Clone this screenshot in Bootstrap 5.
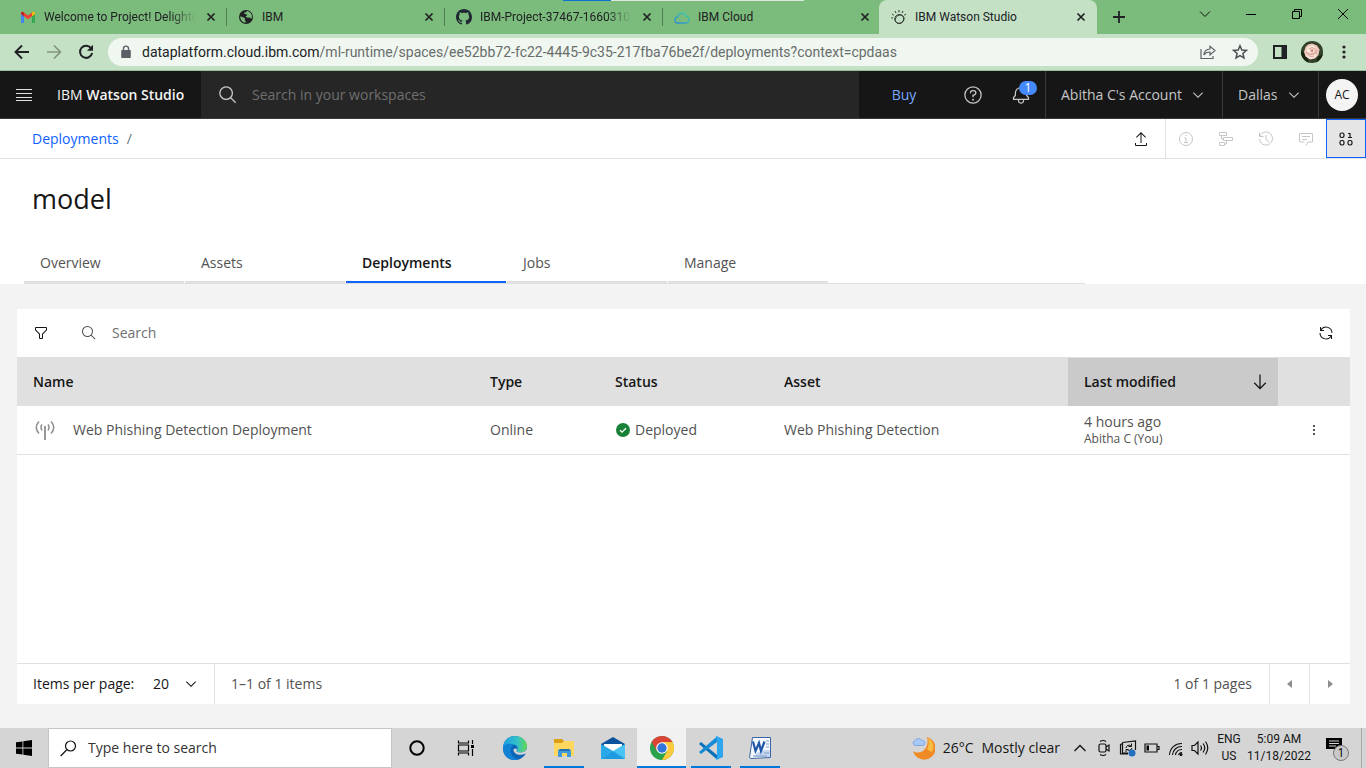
<!DOCTYPE html>
<html lang="en">
<head>
<meta charset="utf-8">
<meta name="viewport" content="width=device-width, initial-scale=1">
<title>IBM Watson Studio</title>
<link rel="stylesheet" href="https://cdn.jsdelivr.net/npm/bootstrap@5.3.0/dist/css/bootstrap.min.css">
<style>
  :root { --ui: "Open Sans", "Noto Sans", sans-serif; --chrome: Roboto, "Open Sans", sans-serif; --app: "Open Sans", "Noto Sans", sans-serif; }
  body { font-family: var(--app); font-size: 14px; line-height: 18px; color: #161616; background: #f3f3f3; }
  svg { display: block; flex: none; }
  button, .plain-input, .page-select { background: none; border: 0; padding: 0; font: inherit; color: inherit; outline: 0; border-radius: 0; }
  a { text-decoration: none; }
  .center { display: flex; align-items: center; justify-content: center; flex: none; }

  /* browser chrome */
  .tab-strip { height: 34px; background: #7bbb7b; padding-left: 9px; font: 12px/16px var(--chrome); color: #202124; }
  .browser-tab { flex: 0 1 218px; min-width: 0; padding: 0 7px 0 11px; border-right: 1px solid #527f52; height: 18px; }
  .browser-tab.no-line { border-right-color: transparent; }
  .browser-tab.current { height: 34px; border: 0; border-radius: 8px 8px 0 0; background: #c5e1c5; padding: 0 8px 0 12px; margin-left: -2px; }
  .tab-label { flex: 1 1 0; min-width: 0; white-space: nowrap; overflow: hidden; }
  .tab-label.fade-end { -webkit-mask-image: linear-gradient(90deg, #000 84%, transparent); mask-image: linear-gradient(90deg, #000 84%, transparent); }
  .tab-close { width: 16px; height: 16px; }
  .new-tab { width: 44px; height: 34px; }
  .win-btn { width: 46px; height: 28px; }
  .load-bar { position: absolute; top: 0; left: 563px; width: 241px; height: 1px; background: linear-gradient(90deg, #0b73d4 48px, #dce8dc 48px); }
  .nav-bar { height: 37px; background: #c5e1c5; border-bottom: 1px solid #9bbb9c; padding-left: 6px; padding-right: 6px; }
  .nav-btn { width: 32px; height: 32px; }
  .omnibox { height: 28px; border-radius: 14px; background: #f0f7f0; margin-left: 6px; margin-right: 6px; padding-left: 10px; padding-right: 2px; font: 14px/20px var(--chrome); }
  .plain-input { min-width: 0; flex: 1 1 0; }
  .url-text { white-space: nowrap; overflow: hidden; color: #696d6c; }
  .url-text b { font-weight: 400; color: #202124; }
  .user-photo { width: 22px; height: 22px; border-radius: 50%; overflow: hidden; }

  /* application header */
  .app-header { height: 48px; background: #161616; border-bottom: 1px solid #393939; color: #c6c6c6; }
  .menu-btn { width: 48px; }
  .brand-name { width: 153px; padding-left: 9px; color: #f4f4f4; white-space: nowrap; }
  .brand-name b { font-weight: 600; }
  .app-search { background: #262626; padding-left: 17px; gap: 14px; }
  .app-search input::placeholder { color: #6f6f6f; opacity: 1; }
  .buy-link { width: 90px; color: #78a9ff; }
  .header-icon { width: 48px; position: relative; }
  .count-badge { position: absolute; top: 10px; left: 22px; width: 18px; height: 14px; border-radius: 7px; background: #4589ff; color: #fff; font-size: 12px; line-height: 14px; }
  .header-menu { border-left: 1px solid #393939; padding: 0 16px 0 15px; gap: 8px; white-space: nowrap; }
  .account-menu { width: 177px; }
  .region-menu { width: 96px; }
  .avatar-cell { width: 48px; border-left: 1px solid #393939; padding-right: 1px; }
  .avatar-chip { width: 32px; height: 32px; border-radius: 50%; background: #f4f4f4; color: #161616; font-size: 12px; }

  /* title area */
  .crumb-bar { height: 40px; background: #fff; border-bottom: 1px solid #e0e0e0; padding-left: 32px; }
  .crumb-bar a { color: #0f62fe; }
  .tool-btn { width: 40px; height: 39px; }
  .tool-group { border-left: 1px solid #e0e0e0; }
  .tool-btn.pressed { background: #e5e5e5; border: 1px solid #0f62fe; color: #161616; }
  .title-area { background: #fff; padding: 22px 0 0 24px; }
  .page-title { font-size: 27px; line-height: 36px; font-weight: 400; margin: 0; padding-left: 8px; }
  .section-tabs { margin-top: 27px; max-width: 1061px; height: 40px; gap: 1px; box-shadow: inset 0 -1px #e0e0e0; }
  .section-tabs a { flex: 0 1 160px; color: #525252; padding: 10px 16px 9px; border-bottom: 3px solid #e0e0e0; }
  .section-tabs a.chosen { color: #161616; font-weight: 600; border-bottom: 2px solid #0f62fe; margin-bottom: 1px; }

  /* deployments table */
  .page-body { padding: 25px 16px 24px 17px; }
  .list-tools { height: 48px; }
  .filter-btn { width: 48px; height: 48px; }
  .list-search { padding-left: 16px; gap: 15px; }
  .list-search svg { color: #525252; }
  .list-search input::placeholder { color: #6f6f6f; opacity: 1; }
  .deploy-table { table-layout: fixed; width: 100%; border-collapse: separate; border-spacing: 0; color: #525252; }
  .deploy-table th { height: 49px; background: #e0e0e0; color: #161616; font-weight: 600; padding: 0 16px; }
  .deploy-table th.sorted { background: #cacaca; box-shadow: inset 0 1px #e0e0e0; padding-right: 10px; }
  .deploy-table td { height: 49px; padding: 0 16px; border-bottom: 1px solid #e0e0e0; white-space: nowrap; }
  .deploy-table .by-line { font-size: 12px; line-height: 16px; }
  .c-type { width: 125px; } .c-status { width: 169px; } .c-asset { width: 300px; } .c-date { width: 210px; } .c-menu { width: 72px; }
  .pager { height: 41px; border-top: 1px solid #e0e0e0; color: #525252; }
  .per-page { width: 198px; padding-left: 16px; padding-right: 15px; border-right: 1px solid #e0e0e0; color: #161616; white-space: nowrap; }
  .page-select { appearance: none; -webkit-appearance: none; width: 46px; background: url("data:image/svg+xml,%3Csvg xmlns='http://www.w3.org/2000/svg' viewBox='0 0 32 32'%3E%3Cpath fill='%23161616' d='M16 22 6 12 7.4 10.6 16 19.2 24.6 10.6 26 12z'/%3E%3C/svg%3E") right center / 16px no-repeat; }
  .page-btn { width: 40px; border-left: 1px solid #e0e0e0; color: #8d8d8d; }
  .page-btn:last-child { width: 41px; }
  .page-count { padding-right: 17px; }

  /* desktop taskbar */
  .task-bar { height: 40px; background: #d5d5d5; font: 14px/18px var(--ui); color: #161616; }
  .start-btn { width: 48px; }
  .task-search { flex: 0 1 344px; background: #fff; border: 1px solid #c5c5c5; padding-left: 11px; gap: 11px; }
  .task-search input::placeholder { color: #333; opacity: 1; }
  .task-item { width: 49px; position: relative; }
  .task-item.open::after { content: ""; position: absolute; left: 5px; right: 4px; bottom: 0; height: 2px; background: #0078d7; }
  .task-item.front { background: #f1f1f1; }
  .task-item.front::after { left: 0; right: 0; }
  .tray-icon { width: 24px; }
  .small-lines { font: 12px/17px var(--chrome); text-align: center; }
  .lang-cell { width: 34px; }
  .clock-cell { width: 66px; }
  .notice-btn { width: 50px; border-right: 1px solid #a9a9a9; margin-right: 4px; }
</style>
</head>
<body class="d-flex flex-column min-vh-100">

<svg width="0" height="0" class="position-absolute" aria-hidden="true">
  <symbol id="x" viewBox="0 0 16 16"><path d="M4.500 4.500l7 7m0-7l-7 7" stroke="#202124" stroke-width="1.700" fill="none"/></symbol>
  <symbol id="chev" viewBox="0 0 32 32"><path fill="currentColor" d="M16 22 6 12 7.400 10.600 16 19.200 24.600 10.600 26 12z"/></symbol>
  <symbol id="search" viewBox="0 0 32 32"><path fill="currentColor" d="M29 27.586l-7.552-7.552a11.018 11.018 0 1 0-1.414 1.414L27.586 29ZM4 13a9 9 0 1 1 9 9A9.010 9.010 0 0 1 4 13Z"/></symbol>
  <symbol id="dots" viewBox="0 0 16 16"><path fill="currentColor" d="M7 3h2v2H7zM7 7h2v2H7zM7 11h2v2H7z"/></symbol>
</svg>

<header class="tab-strip d-flex align-items-center position-relative">
  <div class="load-bar"></div>
  <div class="browser-tab d-flex align-items-center gap-2">
    <svg width="16" height="16" viewBox="0 0 16 16"><path fill="#4285f4" d="M1 4.500l3 2.200V14H2a1 1 0 0 1-1-1z"/><path fill="#34a853" d="M12 6.700l3-2.200V13a1 1 0 0 1-1 1h-2z"/><path fill="#ea4335" d="M4 3.600l4 3 4-3v3.700l-4 3-4-3z"/><path fill="#c5221f" d="M1 4.700C1 2.500 2.800 2.300 4 3.400v3.900L1 5.200z"/><path fill="#fbbc04" d="M15 4.700c0-2.200-1.800-2.400-3-1.300v3.900l3-2.100z"/></svg>
    <span class="tab-label fade-end">Welcome to Project! Delighte</span>
    <button class="tab-close" aria-label="Close tab"><svg width="16" height="16"><use href="#x"/></svg></button>
  </div>
  <div class="browser-tab d-flex align-items-center gap-2">
    <svg width="16" height="16" viewBox="0 0 16 16"><circle cx="8" cy="8" r="7" fill="#202124"/><path fill="#7bbb7b" d="M2.300 7.200l3.300 1.300 1.600 1.100-.6 1.600 1 .6v2C4.600 13.500 2 10.700 2.300 7.200zM9 2.100L7.600 3.500 6 3.600l.8 1.600 1.600-.2.800 1.300-1.800 1.200 2.200 1.300 2.200-.4 1.500 1.700c1.600-3.200.2-7-4.300-8z"/></svg>
    <span class="tab-label">IBM</span>
    <button class="tab-close" aria-label="Close tab"><svg width="16" height="16"><use href="#x"/></svg></button>
  </div>
  <div class="browser-tab d-flex align-items-center gap-2">
    <svg width="16" height="16" viewBox="0 0 16 16"><path fill="#202833" d="M8 0C3.580 0 0 3.580 0 8c0 3.540 2.290 6.530 5.470 7.590.4.070.55-.17.55-.38 0-.19-.01-.82-.01-1.490-2.010.37-2.530-.49-2.690-.94-.09-.23-.48-.94-.82-1.130-.28-.15-.68-.52-.01-.53.63-.01 1.080.58 1.230.82.72 1.210 1.870.87 2.330.66.070-.52.28-.87.51-1.070-1.780-.2-3.640-.89-3.640-3.950 0-.87.31-1.590.82-2.150-.08-.2-.36-1.020.08-2.120 0 0 .67-.21 2.200.82.64-.18 1.320-.27 2-.27s1.360.09 2 .27c1.530-1.040 2.200-.82 2.200-.82.44 1.100.16 1.920.08 2.120.51.56.82 1.270.82 2.150 0 3.070-1.870 3.750-3.650 3.950.29.25.54.73.54 1.480 0 1.070-.01 1.930-.01 2.200 0 .21.15.46.55.38A8.010 8.010 0 0 0 16 8c0-4.420-3.580-8-8-8z"/></svg>
    <span class="tab-label fade-end">IBM-Project-37467-16603102</span>
    <button class="tab-close" aria-label="Close tab"><svg width="16" height="16"><use href="#x"/></svg></button>
  </div>
  <div class="browser-tab no-line d-flex align-items-center gap-2">
    <svg width="16" height="16" viewBox="0 0 16 16" fill="none"><defs><linearGradient id="cg" x1="0" y1="1" x2="1" y2="0"><stop stop-color="#2f86d8"/><stop offset="1" stop-color="#3fd0a0"/></linearGradient></defs><path stroke="url(#cg)" stroke-width="1.300" d="M4 14a3 3 0 0 1-.3-6 4.600 4.600 0 0 1 8.700-.7A3.400 3.400 0 0 1 12 14z"/><path stroke="#55cfae" d="M2 5L.8 4.300M4.500 3.600L3.800 2.400M8 3V1.500M11.500 3.600l.7-1.200"/></svg>
    <span class="tab-label">IBM Cloud</span>
    <button class="tab-close" aria-label="Close tab"><svg width="16" height="16"><use href="#x"/></svg></button>
  </div>
  <div class="browser-tab current d-flex align-items-center gap-2">
    <svg width="16" height="16" viewBox="0 0 16 16" fill="none" stroke="#2c352c"><circle cx="8.300" cy="10" r="4.500"/><ellipse cx="8.500" cy="10.200" rx="4.700" ry="3.800" transform="rotate(-35 8.500 10)" stroke-width=".8"/><path d="M5 4L4 2M8 3.300V1M11 4l1-2M2.700 6.200L1 5M13.300 6.200L15 5M2 9H.3"/></svg>
    <span class="tab-label">IBM Watson Studio</span>
    <button class="tab-close" aria-label="Close tab"><svg width="16" height="16"><use href="#x"/></svg></button>
  </div>
  <button class="new-tab center" aria-label="New tab"><svg width="14" height="14" viewBox="0 0 14 14"><path d="M7 1v12M1 7h12" stroke="#202124" stroke-width="1.800"/></svg></button>
  <div class="ms-auto d-flex align-self-start">
    <button class="win-btn center" aria-label="Search tabs"><svg width="12" height="12" viewBox="0 0 12 12"><path d="M1 3.500l5 5 5-5" stroke="#111" fill="none"/></svg></button>
    <button class="win-btn center" aria-label="Minimize"><svg width="12" height="12" viewBox="0 0 12 12"><path d="M1 6.500h10" stroke="#000"/></svg></button>
    <button class="win-btn center" aria-label="Restore"><svg width="12" height="12" viewBox="0 0 12 12"><path d="M1.500 3.500h7v7h-7zM3.500 3.500v-2h7v7h-2" stroke="#000" fill="none"/></svg></button>
    <button class="win-btn center" aria-label="Close"><svg width="12" height="12" viewBox="0 0 12 12"><path d="M1 1l10 10M11 1L1 11" stroke="#000"/></svg></button>
  </div>
</header>

<div class="nav-bar d-flex align-items-center">
  <button class="nav-btn center" aria-label="Back"><svg width="16" height="16" viewBox="0 0 16 16"><path d="M15 8H2M8 1.500L1.500 8 8 14.500" stroke="#202124" stroke-width="1.900" fill="none"/></svg></button>
  <button class="nav-btn center" aria-label="Forward"><svg width="16" height="16" viewBox="0 0 16 16"><path d="M1 8h13M8 1.500L14.500 8 8 14.500" stroke="#83937f" stroke-width="1.700" fill="none"/></svg></button>
  <button class="nav-btn center" aria-label="Reload"><svg width="16" height="16" viewBox="0 0 16 16"><path d="M13.300 4.500A6.100 6.100 0 1 0 14.100 9" stroke="#202124" stroke-width="2" fill="none"/><path d="M15 .8v6H9z" fill="#202124"/></svg></button>
  <div class="omnibox d-flex align-items-center flex-grow-1">
    <svg width="16" height="16" viewBox="0 0 16 16"><path fill="#5a5f66" d="M4 6h8a.8.8 0 0 1 .8.800v6.400a.8.8 0 0 1-.8.800H4a.8.8 0 0 1-.8-.8V6.800A.8.8 0 0 1 4 6z"/><path d="M5.500 6.500V4.600a2.500 2.500 0 0 1 5 0v1.900" stroke="#5a5f66" stroke-width="1.400" fill="none"/></svg>
    <div class="url-text flex-grow-1 ps-2"><b>dataplatform.cloud.ibm.com</b>/ml-runtime/spaces/ee52bb72-fc22-4445-9c35-217fba76be2f/deployments?context=cpdaas</div>
    <button class="nav-btn center" aria-label="Share"><svg width="16" height="16" viewBox="0 0 16 16" fill="none" stroke="#5f6368" stroke-width="1.200"><path d="M1 5v9.500h12V12"/><path d="M3.800 11c.4-4 2.700-5.800 6.200-6V2.200L15 6.500 10 11V8c-3-.1-4.700.8-6.200 3z"/></svg></button>
    <button class="nav-btn center" aria-label="Bookmark"><svg width="16" height="16" viewBox="0 0 16 16"><path fill="none" stroke="#4b5055" stroke-width="1.500" d="M8 1.700l1.800 4.300 4.600.4-3.500 3 1.100 4.500L8 11.500l-4 2.400 1.100-4.500-3.500-3 4.600-.4z"/></svg></button>
  </div>
  <button class="nav-btn center" aria-label="Side panel"><svg width="16" height="16" viewBox="0 0 16 16"><path fill="#202124" d="M1 1h14v14H1zM3 3v10h6.500V3z" fill-rule="evenodd"/></svg></button>
  <button class="nav-btn center" aria-label="Profile"><span class="user-photo"><svg width="22" height="22" viewBox="0 0 22 22"><path fill="#33402b" d="M0 0h22v22H0z"/><path fill="#17230f" d="M0 10l5 3 3 9H0zM16 0l6 8V0zM17 16l5-3v9h-7z"/><path fill="#efc6b8" d="M7 3.500l4-1 5 2 2.500 4-1 5.500-3.500 3.500-5 1-4.500-3L3 11l1.500-5z"/><path fill="#fae7dc" d="M7 6l5-2 3 3-2 4-5 1-3-2zM4 12l5 2 5-1 2 2-5 3-4-1z"/><path fill="none" stroke="#d39a8e" d="M8 8q3-3 6 0t-1 5q-4 2-6-1M5 11q3 6 8 4"/><circle cx="11" cy="9.500" r="1.500" fill="#d98e82"/></svg></span></button>
  <button class="nav-btn center" aria-label="Browser menu"><svg width="16" height="16" viewBox="0 0 16 16" fill="#202124"><circle cx="8" cy="3" r="1.600"/><circle cx="8" cy="8" r="1.600"/><circle cx="8" cy="13" r="1.600"/></svg></button>
</div>

<header class="app-header d-flex align-items-stretch">
  <button class="menu-btn center" aria-label="Main menu"><svg width="16" height="14" viewBox="0 0 16 14"><path d="M0 1.500h16M0 9.500h16M0 5.500h16M0 12.500h16" stroke="#e0e0e0" stroke-width="1.200"/></svg></button>
  <div class="brand-name d-flex align-items-center"><span>IBM <b>Watson Studio</b></span></div>
  <label class="app-search d-flex align-items-center flex-grow-1"><svg width="20" height="20"><use href="#search"/></svg><input class="plain-input" type="search" placeholder="Search in your workspaces" aria-label="Search in your workspaces"></label>
  <a class="buy-link center" href="#">Buy</a>
  <button class="header-icon center" aria-label="Help"><svg width="20" height="20" viewBox="0 0 32 32" fill="currentColor"><path d="M16 2A14 14 0 1 0 30 16 14 14 0 0 0 16 2Zm0 26A12 12 0 1 1 28 16 12 12 0 0 1 16 28Z"/><circle cx="16" cy="23.500" r="1.500"/><path d="M17 8H15.500A4.490 4.490 0 0 0 11 12.500V13h2v-.5A2.500 2.500 0 0 1 15.500 10H17a2.500 2.500 0 0 1 0 5H15v4.500h2V17a4.500 4.500 0 0 0 0-9Z"/></svg></button>
  <button class="header-icon center" aria-label="Notifications"><svg width="20" height="20" viewBox="0 0 32 32" fill="currentColor"><path d="M28.707 19.293 26 16.586V13a10.014 10.014 0 0 0-9-9.949V1H15V3.051A10.014 10.014 0 0 0 6 13v3.586L3.293 19.293A1 1 0 0 0 3 20v3a1 1 0 0 0 1 1h7v.777a5.152 5.152 0 0 0 4.500 5.199A5.006 5.006 0 0 0 21 25V24h7a1 1 0 0 0 1-1V20A1 1 0 0 0 28.707 19.293ZM19 25a3 3 0 0 1-6 0V24h6Zm8-3H5V20.414L7.707 17.707A1 1 0 0 0 8 17V13a8 8 0 0 1 16 0v4a1 1 0 0 0 .293.707L27 20.414Z"/></svg><span class="count-badge">1</span></button>
  <button class="header-menu account-menu d-flex align-items-center justify-content-between">Abitha C's Account<svg width="16" height="16"><use href="#chev"/></svg></button>
  <button class="header-menu region-menu d-flex align-items-center justify-content-between">Dallas<svg width="16" height="16"><use href="#chev"/></svg></button>
  <div class="avatar-cell center"><button class="avatar-chip center">AC</button></div>
</header>

<div class="crumb-bar d-flex align-items-center">
  <nav aria-label="Breadcrumb" class="d-flex gap-2"><a href="#">Deployments</a><span class="text-secondary">/</span></nav>
  <div class="ms-auto d-flex">
    <button class="tool-btn center me-1" aria-label="Export"><svg width="16" height="16" viewBox="0 0 32 32" fill="currentColor"><path d="M26 24v4H6V24H4v4a2 2 0 0 0 2 2H26a2 2 0 0 0 2-2V24zM6 12l1.410 1.410L15 5.830V24h2V5.830l7.590 7.580L26 12 16 2z"/></svg></button>
    <div class="tool-group d-flex">
      <button class="tool-btn center" aria-label="Information" disabled><svg width="16" height="16" viewBox="0 0 16 16" fill="none" stroke="#c6c6c6"><circle cx="8" cy="8" r="6.500"/><path d="M6.500 7H8v4M6 11.500h4M7.500 4.500h1"/></svg></button>
      <button class="tool-btn center" aria-label="Flow" disabled><svg width="16" height="16" viewBox="0 0 16 16" fill="none" stroke="#c6c6c6"><path d="M1.500 1.500h7v3h-7zM5.500 6.500h9v3h-9zM1.500 11.500h5v3h-5zM3.500 4.500V8h2M8.500 9.500V13h-2"/></svg></button>
      <button class="tool-btn center" aria-label="History" disabled><svg width="16" height="16" viewBox="0 0 16 16" fill="none" stroke="#c6c6c6"><path d="M2 5A6.500 6.500 0 1 1 1.500 8M1.500 1.500V5.500H5.500M8 4v4.500l3 2.500"/></svg></button>
      <button class="tool-btn center" aria-label="Comments" disabled><svg width="16" height="16" viewBox="0 0 16 16" fill="none" stroke="#c6c6c6"><path d="M8 14.500l2-3.500h4.500V2.500h-13V11h5M4 5.500h8M4 8.500h5"/></svg></button>
      <button class="tool-btn pressed center" aria-label="Data panel"><svg width="16" height="16" viewBox="0 0 16 16" fill="none" stroke="currentColor" stroke-width="1.200"><rect x="2" y="2" width="4" height="4.500" rx="1.700"/><rect x="2" y="9.500" width="4" height="4.500" rx="1.700"/><rect x="10" y="9.500" width="4" height="4.500" rx="1.700"/><path d="M10 2.500h2v4M10 6.500h4"/></svg></button>
    </div>
  </div>
</div>

<div class="title-area">
  <h1 class="page-title">model</h1>
  <nav class="section-tabs d-flex" aria-label="Space sections">
    <a href="#">Overview</a><a href="#">Assets</a><a href="#" class="chosen" aria-current="page">Deployments</a><a href="#">Jobs</a><a href="#">Manage</a>
  </nav>
</div>

<main class="page-body flex-grow-1 d-flex flex-column">
  <section class="bg-white flex-grow-1 d-flex flex-column">
    <div class="list-tools d-flex align-items-center">
      <button class="filter-btn center" aria-label="Filter"><svg width="16" height="16" viewBox="0 0 32 32" fill="currentColor"><path d="M18 28H14a2 2 0 0 1-2-2V18.410L4.590 11A2 2 0 0 1 4 9.590V6A2 2 0 0 1 6 4H26a2 2 0 0 1 2 2V9.590A2 2 0 0 1 27.410 11L20 18.410V26A2 2 0 0 1 18 28ZM6 6V9.590l8 8V26h4V17.590l8-8V6Z"/></svg></button>
      <label class="list-search d-flex align-items-center flex-grow-1"><svg width="16" height="16"><use href="#search"/></svg><input class="plain-input" type="search" placeholder="Search" aria-label="Search"></label>
      <button class="filter-btn center" aria-label="Refresh"><svg width="16" height="16" viewBox="0 0 32 32" fill="currentColor"><path d="M12 10H6.780A11 11 0 0 1 27 16h2A13 13 0 0 0 6 7.680V4H4v8h8ZM20 22h5.220A11 11 0 0 1 5 16H3a13 13 0 0 0 23 8.320V28h2V20H20Z"/></svg></button>
    </div>
    <table class="deploy-table">
      <colgroup><col><col class="c-type"><col class="c-status"><col class="c-asset"><col class="c-date"><col class="c-menu"></colgroup>
      <thead><tr><th>Name</th><th>Type</th><th>Status</th><th>Asset</th>
        <th class="sorted" aria-sort="descending"><div class="d-flex align-items-center justify-content-between">Last modified<svg width="16" height="20" viewBox="4 0 24 32"><path fill="#161616" d="M24.590 16.590 17 24.170V4H15V24.170L7.410 16.590 6 18 16 28 26 18z"/></svg></div></th><th></th></tr></thead>
      <tbody><tr>
        <td><div class="d-flex align-items-center gap-3"><svg width="24" height="24" viewBox="0 0 24 24" fill="none" stroke="#8d8d8d" stroke-width="1.500"><path d="M12 8v14" stroke-width="1.800"/><path d="M9 6.500q-2 2.500 0 6M15 6.500q2 2.500 0 6M6 3.500q-5.500 6 0 12M18 3.500q5.500 6 0 12"/></svg>Web Phishing Detection Deployment</div></td>
        <td>Online</td>
        <td><div class="d-flex align-items-center gap-1"><svg width="16" height="16" viewBox="0 0 16 16"><circle cx="8" cy="8" r="7" fill="#198038"/><path d="M5 8.200l2 2 4-4" stroke="#fff" stroke-width="1.300" fill="none"/></svg>Deployed</div></td>
        <td>Web Phishing Detection</td>
        <td><div>4 hours ago</div><div class="by-line">Abitha C (You)</div></td>
        <td class="px-0"><button class="center mx-auto" aria-label="Row actions"><svg width="16" height="16"><use href="#dots"/></svg></button></td>
      </tr></tbody>
    </table>
    <div class="pager d-flex align-items-stretch mt-auto">
      <div class="per-page d-flex align-items-center justify-content-between"><label for="page-size">Items per page:</label><select id="page-size" class="page-select"><option>20</option></select></div>
      <div class="d-flex align-items-center ps-3">1–1 of 1 items</div>
      <div class="d-flex align-items-center ms-auto page-count">1 of 1 pages</div>
      <button class="page-btn center" aria-label="Previous page"><svg width="16" height="16" viewBox="0 0 16 16"><path fill="currentColor" d="M10 4v8L5 8z"/></svg></button>
      <button class="page-btn center" aria-label="Next page"><svg width="16" height="16" viewBox="0 0 16 16"><path fill="currentColor" d="M6 4v8l5-4z"/></svg></button>
    </div>
  </section>
</main>

<footer class="task-bar d-flex align-items-stretch">
  <button class="start-btn center" aria-label="Start"><svg width="16" height="16" viewBox="0 0 16 16"><path d="M0 2.300L6.500 1.400v6.200H0zM7.300 1.300L16 0v7.600H7.300zM0 8.400h6.500v6.200L0 13.700zM7.300 8.400H16V16l-8.700-1.300z"/></svg></button>
  <label class="task-search d-flex align-items-center"><svg width="17" height="17" viewBox="0 0 17 17"><circle cx="10.500" cy="6" r="5" fill="none" stroke="#111" stroke-width="1.200"/><path d="M7 9.500L.7 16" stroke="#111" stroke-width="1.200"/></svg><input class="plain-input" type="search" placeholder="Type here to search" aria-label="Type here to search"></label>
  <button class="task-item center" aria-label="Cortana"><svg width="18" height="18" viewBox="0 0 18 18"><circle cx="9" cy="9" r="6.700" fill="none" stroke="#000" stroke-width="2"/></svg></button>
  <button class="task-item center" aria-label="Task view"><svg width="18" height="18" viewBox="0 0 18 18" fill="none" stroke="#000" stroke-width="1.200"><path d="M1.500 1.500v2.500h10V1.500M1.500 16.500V14h10v2.500M1.500 6h10v6h-10zM15.500 1v4M15.500 10v7"/><path d="M14 6h3v3h-3z" fill="#000" stroke="none"/></svg></button>
  <button class="task-item center" aria-label="Edge"><svg width="24" height="24" viewBox="0 0 24 24"><defs><linearGradient id="eg"><stop stop-color="#1b9de2"/><stop offset=".6" stop-color="#35c1c9"/><stop offset="1" stop-color="#62d94e"/></linearGradient></defs><circle cx="12" cy="12" r="12" fill="#0c66b8"/><path fill="url(#eg)" d="M0 11C1 4 6 0 12 0c7 0 12 5 12 10 0 4-3 6.500-6.500 6.500-3 0-4-1-3.500-2 2-3-.5-6-4-6C5 8.500 1 10 0 14z"/><path fill="#1282d3" d="M0 12c1-5 8-5 10-3-3 2-3.500 9 1 12.500 2 1.500 4 2 5 2C8 26-.5 21 0 12z"/><path fill="#d5d5d5" d="M10.500 13c-.5 5 6 7.500 12 4.500l2 1V11c-1 4-4 5.700-7.500 5.500-3 0-4-1-3.300-2l.3-2z"/></svg></button>
  <button class="task-item open center" aria-label="File Explorer"><svg width="22" height="20" viewBox="0 0 22 20"><path fill="#dda014" d="M1 1h8l2 2v4H1z"/><path fill="#ffd75e" d="M1 5h8l2-2h10v15H1z"/><path fill="#3f9bdc" d="M5 19v-6a2 2 0 0 1 2-2h9a2 2 0 0 1 2 2v6h-4v-4H9v4z"/><path fill="#2371ae" d="M7 11h9l1 2H6z"/></svg></button>
  <button class="task-item center" aria-label="Mail"><svg width="24" height="24" viewBox="0 0 24 24"><path fill="#0b529d" d="M0 8l12-7 12 7v5H0z"/><path fill="#fff" d="M3 8h18v7H3z"/><path fill="#29a9e8" d="M0 8l12 7-12 8z"/><path fill="#1b8fd8" d="M0 23l12-8 12 8z"/><path fill="#48c3f3" d="M24 8v15L0 23l12-8z"/><path fill="#1e9be0" d="M24 23l-12-8-12 8z"/></svg></button>
  <button class="task-item open front center" aria-label="Chrome"><svg width="24" height="24" viewBox="0 0 24 24"><circle cx="12" cy="12" r="12" fill="#2ba24c"/><path fill="#fdca3d" d="M12 6h10.400A12 12 0 0 1 12 24l5.200-9z"/><path fill="#db4437" d="M12 0c4.500 0 8.400 2.500 10.400 6H12L6.800 15 1.600 6A12 12 0 0 1 12 0z"/><circle cx="12" cy="12" r="5.800" fill="#fff"/><circle cx="12" cy="12" r="4.700" fill="#3475dd"/></svg></button>
  <button class="task-item open center" aria-label="Visual Studio Code"><svg width="24" height="24" viewBox="0 0 24 24"><path fill="#0871b9" d="M0 8l2-2 16 13V23.500z"/><path fill="#168bd5" d="M0 16l2 2L18 6V.5z"/><path fill="#2da5ef" d="M17.500 0L24 3v18l-6.500 3L16.800 23 18 21V4l-1.200-3z"/></svg></button>
  <button class="task-item open center" aria-label="Word"><svg width="24" height="24" viewBox="0 0 24 24"><path fill="#f7faff" stroke="#3a66a5" d="M4.500 1.500H22.500v20l-19.500 1-1.500-1z"/><path fill="#c6d8f0" d="M15 14h7v7H6l3-4z"/><path stroke="#7f9dca" d="M18 5h3M18 8h3M18 11h3M16 17h5M5 20h14"/><path d="M5 5.500l2.500 9.500L11 7l2 8 3.500-9.500" fill="none" stroke="#1f58a8" stroke-width="2.200"/></svg></button>

  <div class="ms-auto d-flex align-items-stretch">
    <button class="d-flex align-items-center gap-2 me-2 text-nowrap" aria-label="Weather"><svg width="24" height="24" viewBox="0 0 24 24"><path fill="#f08a24" d="M16 1A11.500 11.500 0 1 1 2 15c8 5 17-3 14-14z"/><path fill="#f8bd43" d="M17 2c5 3 7 8 4 14-2-1-4-2-5-3 2-3 2-7 1-11z"/><path fill="#a9c8f4" stroke="#82a8e5" d="M4 9.500a2.600 2.600 0 0 1 0-5 4 4 0 0 1 7 0 2.500 2.500 0 0 1 1 5z"/></svg><span>26°C</span><span>Mostly clear</span></button>
    <button class="tray-icon center" aria-label="Hidden icons"><svg width="14" height="14" viewBox="0 0 14 14"><path d="M1.500 10L7 4.500 12.500 10" fill="none" stroke="#111" stroke-width="1.300"/></svg></button>
    <button class="tray-icon center" aria-label="Camera"><svg width="16" height="18" viewBox="0 0 16 18" fill="none" stroke="#111" stroke-width="1.200"><rect x="3" y="5" width="7" height="8" rx="1.500"/><path d="M10 8l3-2v6l-3-2M4 2.500q3-2 6 0M4 15.500q3 2 6 0"/></svg></button>
    <button class="tray-icon center" aria-label="Sync"><svg width="18" height="18" viewBox="0 0 18 18" fill="none" stroke="#111" stroke-width="1.200"><path d="M3.500 3.500L16.500 2v9M3.500 3.500V14H9M3.500 4.500l-2 1V15H9"/><path d="M7 9a3 3 0 0 1 5-2M12.500 4.500v3h-3M13 9a3 3 0 0 1-5 1.500M7 13v-2.500h2.500" stroke-width="1"/><circle cx="13" cy="14" r="3.500" fill="#246fc0" stroke="none"/></svg></button>
    <button class="tray-icon center" aria-label="Battery"><svg width="16" height="12" viewBox="0 0 16 12"><path d="M1 2h12v8H1zM13 4.500h2v3h-2" fill="none" stroke="#111" stroke-width="1.200"/><path d="M2.500 3.500H5v5H2.500z"/></svg></button>
    <button class="tray-icon center" aria-label="Wi-Fi"><svg width="16" height="16" viewBox="0 0 16 16" fill="none" stroke="#111" stroke-width="1.100"><path d="M1.500 15A12 12 0 0 1 14 3.500M4.500 15A9 9 0 0 1 14 6.500M7.500 15A6 6 0 0 1 14 9.500M10.500 15A3.500 3.500 0 0 1 14 12.500"/><circle cx="13" cy="14.500" r="1" fill="#111"/></svg></button>
    <button class="tray-icon center" aria-label="Volume"><svg width="18" height="16" viewBox="0 0 18 16" fill="none" stroke="#111" stroke-width="1.200"><path d="M1 5.500h2.500L7 2v12l-3.500-3.500H1zM9.500 5.500q2 2.500 0 5M12 3.500q3.500 4.500 0 9M14.500 1.500q4.500 6.500 0 13"/></svg></button>
    <button class="lang-cell small-lines">ENG<br>US</button>
    <button class="clock-cell small-lines">5:09 AM<br>11/18/2022</button>
    <button class="notice-btn center" aria-label="Notifications"><svg width="26" height="26" viewBox="0 0 26 26"><path d="M2 3h16v11h-5l-3 3v-3H2z"/><path d="M5 6h10M5 8.500h10M5 11h7" stroke="#d5d5d5"/><circle cx="17" cy="18" r="7.500" fill="#c9c9c9" stroke="#777"/><text x="17" y="22" text-anchor="middle" font-size="12">1</text></svg></button>
  </div>
</footer>
<script src="https://cdn.jsdelivr.net/npm/bootstrap@5.3.0/dist/js/bootstrap.bundle.min.js"></script>
</body>
</html>
